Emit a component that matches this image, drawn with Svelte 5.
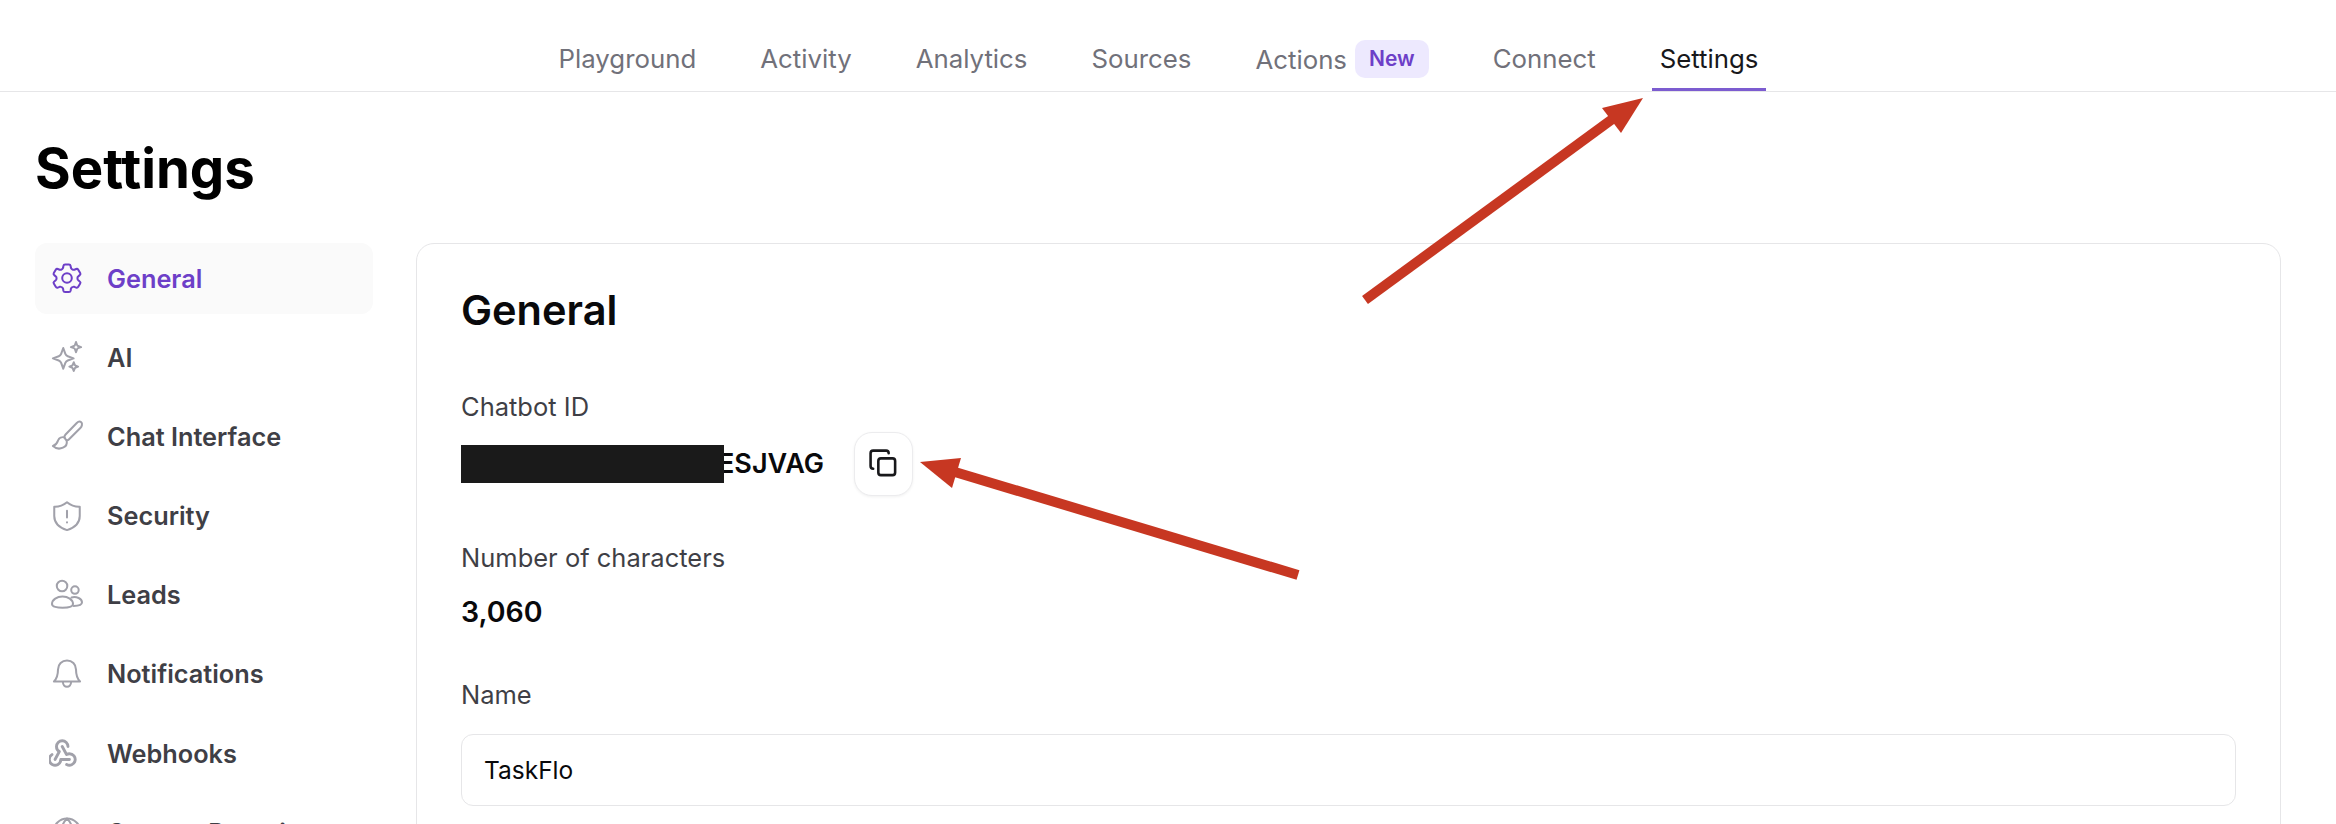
<script lang="ts">
	const tabs = ['Playground', 'Activity', 'Analytics', 'Sources', 'Actions', 'Connect', 'Settings'];
	const menu = [
		{ label: 'General', icon: 'gear', active: true },
		{ label: 'AI', icon: 'sparkles' },
		{ label: 'Chat Interface', icon: 'brush' },
		{ label: 'Security', icon: 'shield' },
		{ label: 'Leads', icon: 'users' },
		{ label: 'Notifications', icon: 'bell' },
		{ label: 'Webhooks', icon: 'hook' },
		{ label: 'Custom Domains', icon: 'globe' }
	];
</script>

<div class="page">
	<nav class="tabs">
		{#each tabs as tab}
			<div class="tab" class:current={tab === 'Settings'}>
				<span class:drop={tab === 'Actions'}>{tab}</span>
				{#if tab === 'Actions'}
					<span class="badge">New</span>
				{/if}
			</div>
		{/each}
	</nav>

	<main class="content">
		<h1>Settings</h1>
		<div class="columns">
			<aside class="menu">
				{#each menu as item}
					<div class="item" class:active={item.active}>
						<svg class="icon" viewBox="0 0 24 24" fill="none" stroke="currentColor" stroke-width="1.35" stroke-linecap="round" stroke-linejoin="round">
							{#if item.icon === 'gear'}
								<path d="M9.6 3.9c.1-.5.6-.9 1.1-.9h2.6c.5 0 1 .4 1.1.9l.2 1.3c.1.4.4.7.7.9l.5.3c.3.2.7.2 1.1.1l1.2-.5c.5-.2 1.1 0 1.4.5l1.3 2.2c.3.5.1 1.1-.3 1.4l-1 .8c-.3.2-.5.6-.5 1v.6c0 .4.2.8.5 1l1 .8c.4.3.6.9.3 1.4l-1.3 2.2c-.3.5-.9.7-1.4.5l-1.2-.5c-.4-.1-.8-.1-1.1.1l-.5.3c-.3.2-.6.5-.7.9l-.2 1.3c-.1.5-.6.9-1.1.9h-2.6c-.5 0-1-.4-1.1-.9l-.2-1.3c-.1-.4-.4-.7-.7-.9l-.5-.3c-.3-.2-.7-.2-1.1-.1l-1.2.5c-.5.2-1.1 0-1.4-.5l-1.3-2.2c-.3-.5-.1-1.1.3-1.4l1-.8c.3-.2.5-.6.5-1v-.6c0-.4-.2-.8-.5-1l-1-.8c-.4-.3-.6-.9-.3-1.4l1.3-2.2c.3-.5.9-.7 1.4-.5l1.2.5c.4.1.8.1 1.1-.1l.5-.3c.3-.2.6-.5.7-.9z" />
								<circle cx="12" cy="12" r="3.2" />
							{:else if item.icon === 'sparkles'}
								<path d="M9.5 6l1.4 3.900c.3.800.8 1.300 1.600 1.600l3.900 1.400-3.900 1.400c-.8.300-1.300.800-1.600 1.600l-1.400 3.900-1.400-3.900c-.3-.8-.8-1.300-1.600-1.600L2.600 12.900l3.900-1.400c.8-.3 1.300-.8 1.600-1.600z" />
								<path d="M18 2l.7 2c.1.300.4.600.7.700l2 .7-2 .7c-.3.100-.6.400-.7.700l-.7 2-.7-2c-.1-.3-.4-.6-.7-.7l-2-.7 2-.7c.3-.1.6-.4.7-.7z" />
								<path d="M16.500 15.500l.6 1.600c.1.300.4.600.7.700l1.600.6-1.600.6c-.3.100-.6.400-.7.700l-.6 1.600-.6-1.600c-.1-.3-.4-.6-.7-.7l-1.600-.6 1.600-.6c.3-.1.6-.4.7-.7z" />
							{:else if item.icon === 'brush'}
								<path d="M21.500 2.800c-.9-.7-2.200-.3-3 .5l-7.600 7.900c-.6.600-.8 1.300-.5 2l.8 1.200c.6.500 1.400.5 2-.1l7.700-7.600C22 5.600 22.400 3.600 21.500 2.800z" />
								<path d="M10.400 13c-1.800-.6-3.700.2-4.400 2-.5 1.400-.9 2.900-3.400 3.700 1.900 1.700 4.500 2.100 6.700 1.100 1.700-.8 2.900-2.500 2.500-4.400" />
							{:else if item.icon === 'shield'}
								<path d="M12 2.800c2.500 2.100 5.400 3.100 8.500 3v6.200c0 4.600-3.500 7.800-8.500 9.400-5-1.600-8.500-4.800-8.500-9.400V5.800c3.100.1 6-.9 8.500-3z" />
								<path d="M12 8.500v4.500" />
								<path d="M12 16.200v.1" />
							{:else if item.icon === 'users'}
								<circle cx="8.700" cy="6" r="3.500" />
								<circle cx="17.300" cy="8.700" r="2.500" />
								<path d="M2 18c0-3 3.400-5 7-5s7 2 7 5c0 1.800-3.500 2.500-7 2.500S2 19.800 2 18z" />
								<path d="M15 13.600c3.300-.8 7 .7 7 3.300 0 1.600-2 2.400-5.500 2.400" />
							{:else if item.icon === 'bell'}
								<path d="M12 3c-3.400 0-6 2.600-6 6 0 4.500-1.300 6.600-2.700 8h17.400C19.300 15.600 18 13.500 18 9c0-3.400-2.600-6-6-6z" />
								<path d="M9.300 17.500c0 1.700 1.200 3 2.700 3s2.700-1.300 2.700-3" />
							{:else if item.icon === 'hook'}
								<g transform="translate(-2.700 0) scale(0.96)" stroke-width="2">
									<path d="M4.876 13.610a4 4 0 1 0 6.124 3.390h6" />
									<path d="M15.066 20.502a4 4 0 1 0 1.934-7.502c-.706 0-1.424.179-2 .5l-3-5.500" />
									<path d="M16 8a4 4 0 1 0-8 0c0 1.506.77 2.818 2 3.500l-3 5.500" />
								</g>
							{:else}
								<circle cx="12" cy="12" r="9" />
								<path d="M3 12h18M12 3c5 5 5 13 0 18M12 3c-5 5-5 13 0 18" />
							{/if}
						</svg>
						<span>{item.label}</span>
					</div>
				{/each}
			</aside>

			<section class="card">
				<h2>General</h2>

				<div class="label">Chatbot ID</div>
				<div class="id-row">
					<span class="redacted"></span>
					<span class="value">ESJVAG</span>
					<button class="copy" aria-label="Copy">
						<svg viewBox="0 0 24 24" fill="none" stroke="currentColor" stroke-width="2" stroke-linecap="round" stroke-linejoin="round">
							<rect x="8" y="8" width="13" height="13" rx="2" />
							<path d="M4 16c-1.100 0-2-.9-2-2V4c0-1.100.9-2 2-2h10c1.100 0 2 .9 2 2" />
						</svg>
					</button>
				</div>

				<div class="label chars">Number of characters</div>
				<div class="value count">3,060</div>

				<label class="label name" for="name">Name</label>
				<input id="name" class="field" value="TaskFlo" />
			</section>
		</div>
	</main>

	<svg class="arrows" viewBox="0 0 2336 824">
		<line x1="1365" y1="300" x2="1622" y2="112" />
		<polygon points="1643,98 1602,108 1621,133" />
		<line x1="1298" y1="575" x2="945" y2="469" />
		<polygon points="920,462 961,458 952,488" />
	</svg>
</div>

<style>
	:global(body) {
		margin: 0;
		background: #fff;
	}

	.page {
		position: relative;
		width: 2336px;
		height: 824px;
		overflow: hidden;
		font-family: Inter, "Liberation Sans", sans-serif;
		color: #09090b;
	}

	.tabs {
		display: flex;
		justify-content: center;
		gap: 48px;
		height: 91px;
		padding-right: 19px;
		border-bottom: 1px solid #e6e6e8;
	}

	.tab {
		display: flex;
		align-items: center;
		gap: 8px;
		padding: 29px 8px 0;
		height: 59px;
		border-bottom: 3px solid transparent;
		font-size: 25.800px;
		font-weight: 400;
		color: #71717a;
	}

	.tab.current {
		color: #18181b;
		border-bottom-color: #7c5cd0;
	}

	.drop {
		padding-top: 2px;
	}

	.badge {
		display: flex;
		align-items: center;
		height: 38px;
		padding: 0 14px;
		border-radius: 10px;
		background: #ede9fe;
		color: #6d3fc8;
		font-size: 21px;
		font-weight: 600;
	}

	.content {
		padding: 0 55px 0 35px;
	}

	h1 {
		margin: 0;
		padding: 42.500px 0 42px;
		font-size: 54.500px;
		line-height: 66px;
		font-weight: 700;
		color: #000;
	}

	.columns {
		display: flex;
		gap: 43px;
	}

	.menu {
		display: flex;
		flex-direction: column;
		gap: 8.200px;
		width: 338px;
		flex: none;
	}

	.item {
		display: flex;
		align-items: center;
		gap: 22px;
		height: 71px;
		padding: 0 14px;
		border-radius: 12px;
		font-size: 25.300px;
		font-weight: 600;
		color: #3f3f46;
		flex: none;
	}

	.item .icon {
		width: 36px;
		height: 36px;
		flex: none;
		color: #a1a1aa;
	}

	.item.active {
		background: #fafafa;
		color: #6d3fc8;
	}

	.item.active .icon {
		color: #6d3fc8;
	}

	.card {
		flex: 1;
		height: 640px;
		padding: 0 44px;
		border: 1px solid #e6e6e8;
		border-radius: 18px;
	}

	h2 {
		margin: 0;
		padding: 40px 0 0;
		font-size: 41.500px;
		line-height: 52px;
		font-weight: 600;
		color: #09090b;
	}

	.label {
		display: block;
		font-size: 25.500px;
		line-height: 36px;
		font-weight: 400;
		color: #3f3f46;
	}

	h2 + .label {
		margin-top: 53px;
	}

	.id-row {
		display: flex;
		align-items: center;
		margin-top: 7px;
	}

	.redacted {
		width: 263px;
		height: 38px;
		background: #1a1a1a;
		margin-right: -6px;
		position: relative;
		z-index: 1;
	}

	.value {
		font-size: 27px;
		font-weight: 600;
		color: #09090b;
	}

	.copy {
		display: flex;
		align-items: center;
		justify-content: center;
		width: 59px;
		height: 64px;
		margin-left: 30px;
		padding: 0;
		background: #fff;
		border: 1px solid #ececee;
		border-radius: 18px;
		box-shadow: 0 1px 3px rgba(0, 0, 0, 0.06);
		color: #18181b;
	}

	.copy svg {
		width: 31px;
		height: 31px;
	}

	.chars {
		margin-top: 44px;
	}

	.count {
		margin-top: 18px;
		font-size: 28.500px;
		line-height: 36px;
	}

	.name {
		margin-top: 47px;
	}

	.field {
		display: block;
		box-sizing: border-box;
		width: 100%;
		height: 72px;
		margin-top: 21px;
		padding: 0 22px;
		border: 1px solid #e6e6e8;
		border-radius: 12px;
		font: 400 24.500px Inter, "Liberation Sans", sans-serif;
		color: #09090b;
		background: #fff;
	}

	.arrows {
		position: absolute;
		inset: 0;
		width: 2336px;
		height: 824px;
		pointer-events: none;
	}

	.arrows line {
		stroke: #c73722;
		stroke-width: 10;
	}

	.arrows polygon {
		fill: #c73722;
	}
</style>
